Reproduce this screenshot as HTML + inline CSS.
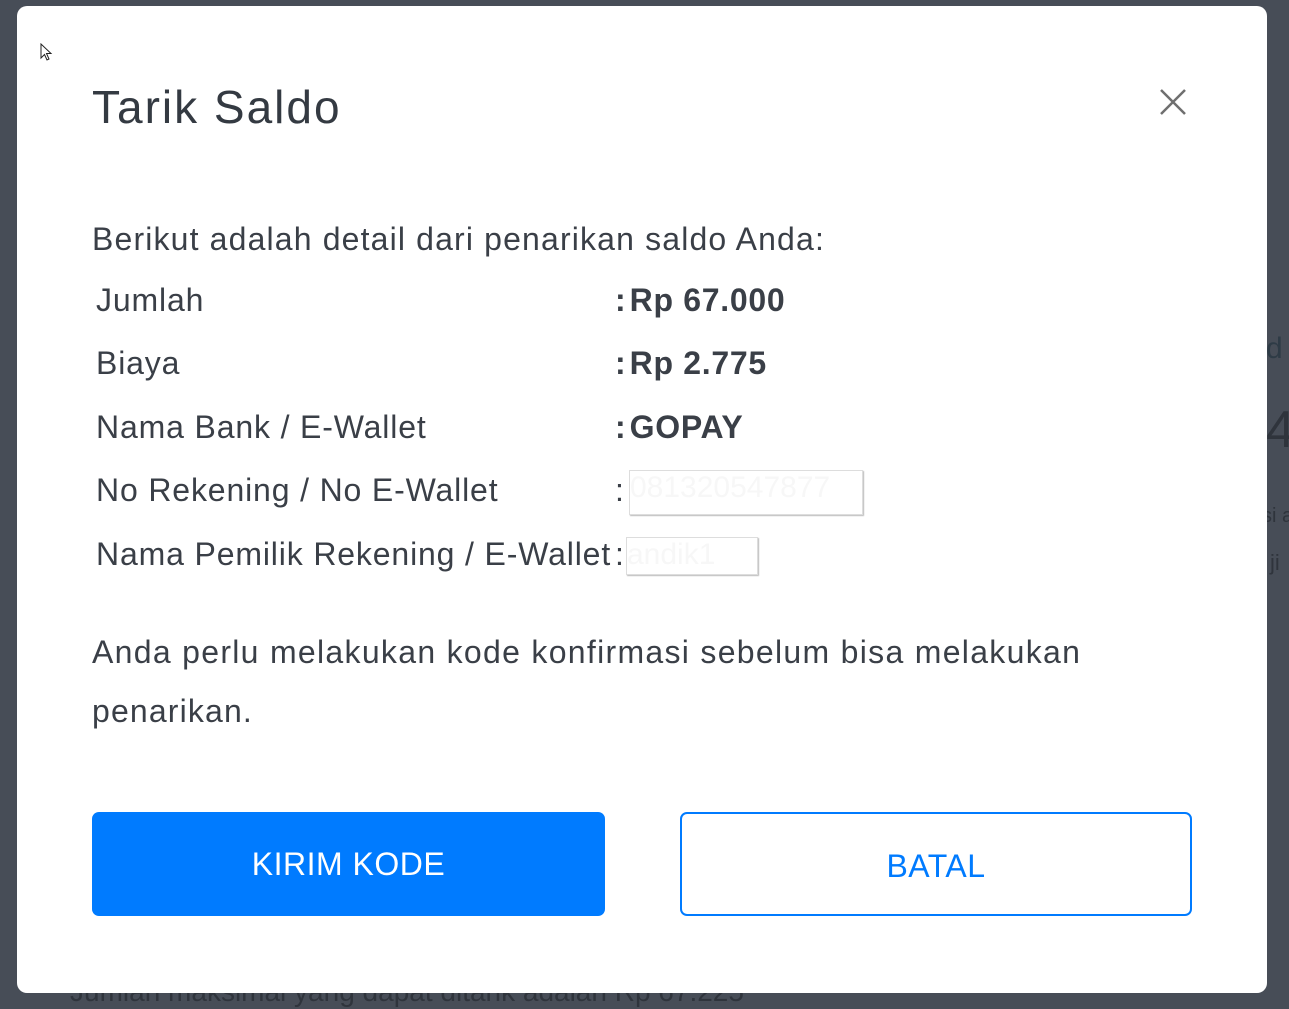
<!DOCTYPE html>
<html><head><meta charset="utf-8"><style>
html,body{margin:0;padding:0;}
body{width:1289px;height:1009px;background:#474d57;position:relative;overflow:hidden;font-family:"Liberation Sans",sans-serif;color:#3a3f47;}
.bgt{position:absolute;color:#2f343c;font-size:30px;white-space:nowrap;}
.modal{position:absolute;left:17px;top:6px;width:1250px;height:987px;background:#fff;border-radius:10px;overflow:hidden;}
.t{position:absolute;font-size:46px;left:75px;top:74px;color:#343a42;letter-spacing:2px;}
.x{position:absolute;left:1143px;top:83px;}
.p{position:absolute;font-size:32px;left:75px;color:#3a3f47;white-space:nowrap;letter-spacing:1.15px;}
.lbl{position:absolute;font-size:32px;left:79px;color:#3a3f47;letter-spacing:0.85px;white-space:nowrap;}
.val{position:absolute;font-size:32px;left:598px;font-weight:bold;color:#3a3f47;white-space:nowrap;}
.val span{margin-left:4px;letter-spacing:0.7px;}
.box{position:absolute;background:#fff;border:1px solid #ddd;box-shadow:1px 1px 1px #bbb;color:#f7f7f7;font-size:30px;overflow:hidden;white-space:nowrap;}
.btn{position:absolute;top:806px;height:104px;border-radius:7px;font-size:32px;text-align:center;line-height:104px;box-sizing:border-box;letter-spacing:0.5px;}
</style></head><body>
<div class="bgt" style="left:1266px;top:332px;color:#2e3b46">d</div>
<div class="bgt" style="left:1266px;top:400px;font-size:52px">4</div>
<div class="bgt" style="left:1262px;top:505px;font-size:20px">si a</div>
<div class="bgt" style="left:1270px;top:550px;font-size:22px">ji</div>
<div class="bgt" style="left:70px;top:976px;font-size:28px">Jumlah maksimal yang dapat ditarik adalah Rp 67.225</div>
<div class="modal">
<svg style="position:absolute;left:23px;top:37px" width="14" height="20" viewBox="0 0 14 20"><path d="M1 1L1 15L4.5 11.5L7 17L9 16L6.5 10.5L11 10.5Z" fill="#fff" stroke="#222" stroke-width="1"/></svg>
<div class="t">Tarik Saldo</div>
<svg class="x" width="26" height="26" viewBox="0 0 26 26"><path d="M1 1L25 25M25 1L1 25" stroke="#6f6f6f" stroke-width="2.5"/></svg>
<div class="p" style="top:215px">Berikut adalah detail dari penarikan saldo Anda:</div>
<div class="lbl" style="top:276px">Jumlah</div><div class="val" style="top:276px">:<span>Rp 67.000</span></div>
<div class="lbl" style="top:339px">Biaya</div><div class="val" style="top:339px">:<span>Rp 2.775</span></div>
<div class="lbl" style="top:403px">Nama Bank / E-Wallet</div><div class="val" style="top:403px">:<span>GOPAY</span></div>
<div class="lbl" style="top:466px">No Rekening / No E-Wallet</div><div class="val" style="top:466px;font-weight:normal">:</div>
<div class="box" style="left:612px;top:464px;width:232px;height:43px">081320547877</div>
<div class="lbl" style="top:530px">Nama Pemilik Rekening / E-Wallet</div><div class="val" style="top:530px;font-weight:normal">:</div>
<div class="box" style="left:609px;top:531px;width:130px;height:36px">andik1</div>
<div class="p" style="top:628px;letter-spacing:1.3px">Anda perlu melakukan kode konfirmasi sebelum bisa melakukan</div>
<div class="p" style="top:687px">penarikan.</div>
<div class="btn" style="left:75px;width:513px;background:#007bff;color:#fff">KIRIM KODE</div>
<div class="btn" style="left:663px;width:512px;border:2px solid #007bff;color:#007bff">BATAL</div>
</div>
</body></html>
